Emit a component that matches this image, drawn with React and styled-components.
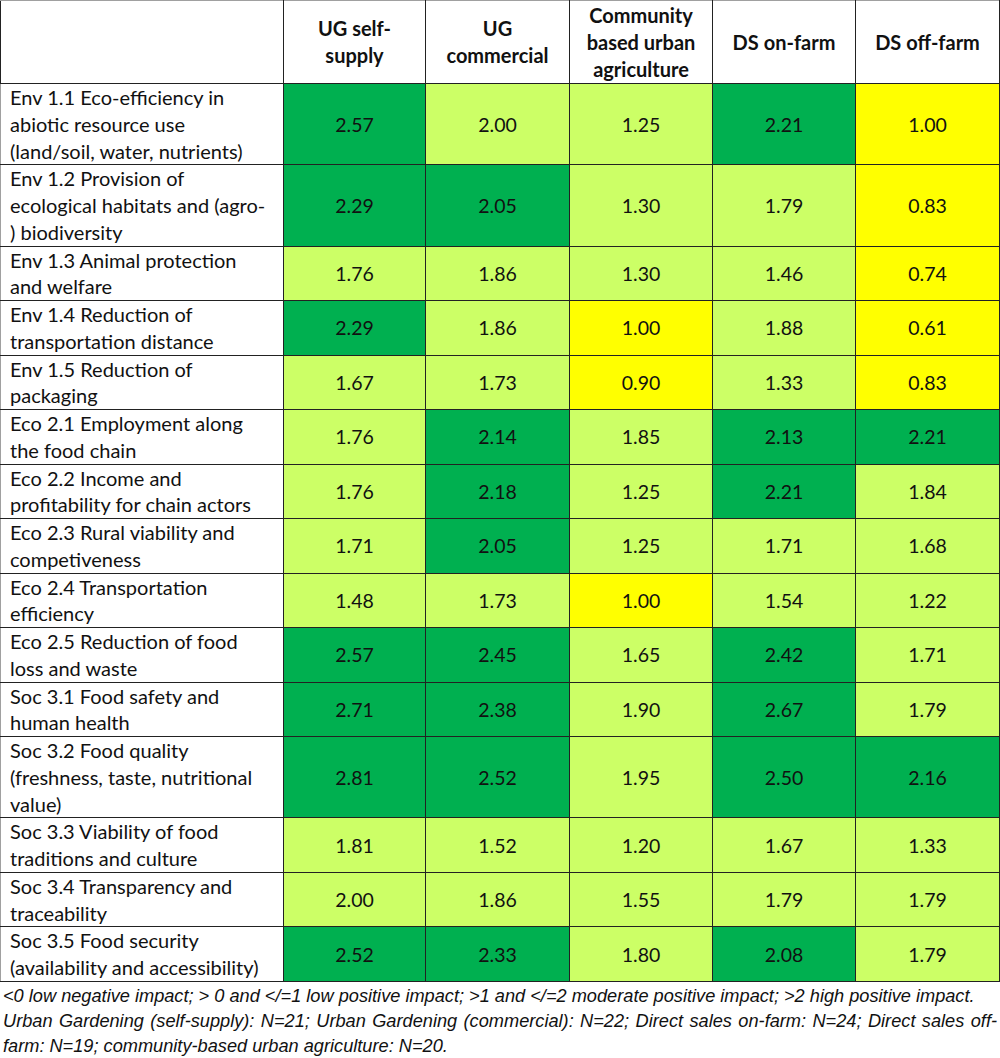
import styled, { createGlobalStyle } from 'styled-components';

const GlobalStyle = createGlobalStyle`
  html, body {
    margin: 0;
    padding: 0;
    background: #ffffff;
  }
`;

const Page = styled.div`
  width: 1000px;
  font-family: Lato, "Open Sans", sans-serif;
  color: #111;
`;

const Table = styled.table`
  border-collapse: collapse;
  table-layout: fixed;
  width: 999px;
  border: 1px solid #a0a0a0;
`;

const Col = styled.col`
  width: ${(p) => p.$w}px;
`;

const HeadCell = styled.th`
  height: 82px;
  padding: 0 4px;
  border: 1px solid #222;
  border-top-color: #a0a0a0;
  font-size: 20px;
  font-weight: 700;
  line-height: 27px;
  text-align: center;
  vertical-align: middle;
  background: #fff;
`;

const LabelCell = styled.td`
  padding: 0 2px 0 9px;
  border: 1px solid #222;
  border-left-color: #a0a0a0;
  font-size: 20px;
  line-height: 26.75px;
  white-space: nowrap;
  vertical-align: top;
  background: #fff;
`;

const tones = {
  high: '#00b050',
  mid: '#ccff66',
  low: '#ffff00',
};

const ValueCell = styled.td`
  padding: 0;
  border: 1px solid #222;
  font-size: 19.5px;
  text-align: center;
  vertical-align: middle;
  background: ${(p) => tones[p.$tone]};
`;

const Notes = styled.div`
  padding: 2px 3px 0 3px;
  font-family: "Liberation Sans", Arial, sans-serif;
  font-style: italic;
  font-size: 18.2px;
  line-height: 25px;
  color: #111;
`;

const NoteLine = styled.div`
  white-space: nowrap;
  text-align: ${(p) => (p.$justify ? 'justify' : 'left')};
  text-align-last: ${(p) => (p.$justify ? 'justify' : 'left')};
`;

const widths = [283, 142, 144, 143, 143, 144];

const columns = [
  ['UG self-', 'supply'],
  ['UG', 'commercial'],
  ['Community', 'based urban', 'agriculture'],
  ['DS on-farm'],
  ['DS off-farm'],
];

const rows = [
  [['Env 1.1 Eco-efficiency in', 'abiotic resource use', '(land/soil, water, nutrients)'], [2.57, 2.0, 1.25, 2.21, 1.0]],
  [['Env 1.2 Provision of', 'ecological habitats and (agro-', ') biodiversity'], [2.29, 2.05, 1.3, 1.79, 0.83]],
  [['Env 1.3 Animal protection', 'and welfare'], [1.76, 1.86, 1.3, 1.46, 0.74]],
  [['Env 1.4 Reduction of', 'transportation distance'], [2.29, 1.86, 1.0, 1.88, 0.61]],
  [['Env 1.5 Reduction of', 'packaging'], [1.67, 1.73, 0.9, 1.33, 0.83]],
  [['Eco 2.1 Employment along', 'the food chain'], [1.76, 2.14, 1.85, 2.13, 2.21]],
  [['Eco 2.2 Income and', 'profitability for chain actors'], [1.76, 2.18, 1.25, 2.21, 1.84]],
  [['Eco 2.3 Rural viability and', 'competiveness'], [1.71, 2.05, 1.25, 1.71, 1.68]],
  [['Eco 2.4 Transportation', 'efficiency'], [1.48, 1.73, 1.0, 1.54, 1.22]],
  [['Eco 2.5 Reduction of food', 'loss and waste'], [2.57, 2.45, 1.65, 2.42, 1.71]],
  [['Soc 3.1 Food safety and', 'human health'], [2.71, 2.38, 1.9, 2.67, 1.79]],
  [['Soc 3.2 Food quality', '(freshness, taste, nutritional', 'value)'], [2.81, 2.52, 1.95, 2.5, 2.16]],
  [['Soc 3.3 Viability of food', 'traditions and culture'], [1.81, 1.52, 1.2, 1.67, 1.33]],
  [['Soc 3.4 Transparency and', 'traceability'], [2.0, 1.86, 1.55, 1.79, 1.79]],
  [['Soc 3.5 Food security', '(availability and accessibility)'], [2.52, 2.33, 1.8, 2.08, 1.79]],
];

// >2 high, >1 moderate, otherwise low positive
const toneFor = (v) => (v > 2 ? 'high' : v > 1 ? 'mid' : 'low');

const Lines = ({ lines }) =>
  lines.map((l, i) => (
    <span key={i}>
      {l}
      {i < lines.length - 1 && <br />}
    </span>
  ));

export default function App() {
  return (
    <Page>
      <GlobalStyle />
      <Table>
        <colgroup>
          {widths.map((w, i) => (
            <Col key={i} $w={w} />
          ))}
        </colgroup>
        <thead>
          <tr>
            <HeadCell />
            {columns.map((c, i) => (
              <HeadCell key={i}>
                <Lines lines={c} />
              </HeadCell>
            ))}
          </tr>
        </thead>
        <tbody>
          {rows.map(([label, values], r) => (
            <tr key={r}>
              <LabelCell>
                <Lines lines={label} />
              </LabelCell>
              {values.map((v, i) => (
                <ValueCell key={i} $tone={toneFor(v)}>
                  {v.toFixed(2)}
                </ValueCell>
              ))}
            </tr>
          ))}
        </tbody>
      </Table>
      <Notes>
        <NoteLine>
          &lt;0 low negative impact; &gt; 0 and &lt;/=1 low positive impact; &gt;1 and &lt;/=2 moderate positive impact; &gt;2 high positive impact.
        </NoteLine>
        <NoteLine $justify>
          Urban Gardening (self-supply): N=21; Urban Gardening (commercial): N=22; Direct sales on-farm: N=24; Direct sales off-
        </NoteLine>
        <NoteLine>farm: N=19; community-based urban agriculture: N=20.</NoteLine>
      </Notes>
    </Page>
  );
}
